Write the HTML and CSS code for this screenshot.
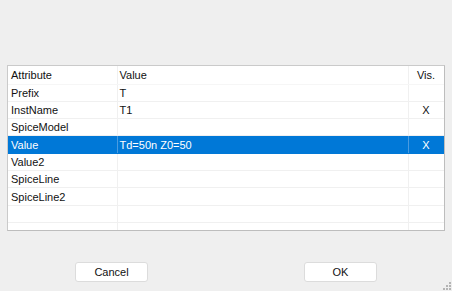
FILE: index.html
```html
<!DOCTYPE html>
<html lang="en">
<head>
    <meta charset="UTF-8">
    <title>Attributes</title>
    <link rel="stylesheet" href="styles.css">
</head>
<body>
    <div class="dialog">
        <div class="attr-box">
            <table class="attr-table">
                <colgroup>
                    <col class="col-attr">
                    <col class="col-value">
                    <col class="col-vis">
                </colgroup>
                <thead>
                    <tr>
                        <th>Attribute</th>
                        <th>Value</th>
                        <th class="vis">Vis.</th>
                    </tr>
                </thead>
                <tbody>
                    <tr><td>Prefix</td><td>T</td><td class="vis"></td></tr>
                    <tr><td>InstName</td><td>T1</td><td class="vis">X</td></tr>
                    <tr><td>SpiceModel</td><td></td><td class="vis"></td></tr>
                    <tr class="selected"><td>Value</td><td>Td=50n Z0=50</td><td class="vis">X</td></tr>
                    <tr><td>Value2</td><td></td><td class="vis"></td></tr>
                    <tr><td>SpiceLine</td><td></td><td class="vis"></td></tr>
                    <tr><td>SpiceLine2</td><td></td><td class="vis"></td></tr>
                    <tr><td></td><td></td><td class="vis"></td></tr>
                    <tr><td></td><td></td><td class="vis"></td></tr>
                </tbody>
            </table>
        </div>
        <div class="buttons">
            <button class="btn">Cancel</button>
            <button class="btn">OK</button>
        </div>
        <div class="grip">
            <span></span><span></span><span></span>
            <span></span><span></span><span></span>
        </div>
    </div>
</body>
</html>
```

FILE: styles.css
```css
* {
    margin: 0;
    padding: 0;
    box-sizing: border-box;
    font-family: 'Liberation Sans', Arial, sans-serif;
}

body {
    background: #efefef;
    width: 452px;
    height: 291px;
    overflow: hidden;
}

.dialog {
    position: relative;
    height: 291px;
    padding: 65px 7px 0 7px;
}

.attr-box {
    height: 166px;
    background: white;
    border: 1px solid #cacaca;
    border-right-color: #bdbdbd;
    border-bottom-color: #bdbdbd;
    overflow: hidden;
}

.attr-table {
    width: 436px;
    border-collapse: collapse;
    table-layout: fixed;
    font-size: 11px;
    color: #111;
}

.col-attr {
    width: 109px;
}

.col-value {
    width: 291px;
}

.col-vis {
    width: 36px;
}

.attr-table th {
    height: 18px;
    font-weight: normal;
    text-align: left;
    padding: 0 0 0 3px;
    border-right: 1px solid #f0f0f0;
    border-bottom: 1px solid #f6f6f6;
}

.attr-table td {
    height: 17.33px;
    padding: 0 0 0 3px;
    border-right: 1px solid #f0f0f0;
    border-bottom: 1px solid #f0f0f0;
    white-space: nowrap;
}

.attr-table th:nth-child(2),
.attr-table td:nth-child(2) {
    padding-left: 2px;
}

.attr-table .vis {
    text-align: center;
    padding: 0;
}

.attr-table tr.selected td {
    background: #0078d7;
    color: white;
    border-right-color: #4a9be0;
    border-bottom-color: #0078d7;
}

.buttons {
    display: flex;
    justify-content: center;
    gap: 156px;
    margin-top: 31px;
    margin-left: -7px;
    margin-right: -7px;
}

.btn {
    width: 73px;
    height: 20px;
    background: white;
    border: 1px solid #dcdcdc;
    border-radius: 3px;
    font-size: 11px;
    color: #111;
}

.grip {
    position: absolute;
    right: 1px;
    bottom: 1px;
    width: 9px;
    height: 9px;
}

.grip span {
    position: absolute;
    width: 2px;
    height: 2px;
    background: #b4b4b4;
}

.grip span:nth-child(1) { right: 0; bottom: 6px; }
.grip span:nth-child(2) { right: 3px; bottom: 3px; }
.grip span:nth-child(3) { right: 0; bottom: 3px; }
.grip span:nth-child(4) { right: 6px; bottom: 0; }
.grip span:nth-child(5) { right: 3px; bottom: 0; }
.grip span:nth-child(6) { right: 0; bottom: 0; }
```
